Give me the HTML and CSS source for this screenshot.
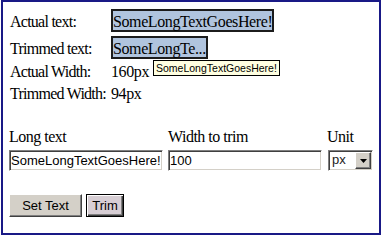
FILE: index.html
```html
<!DOCTYPE html>
<html>
<head>
<meta charset="utf-8">
<title>Trim text</title>
<link rel="stylesheet" href="styles.css">
</head>
<body>
<div class="frame">
  <div class="results">
    <div class="label">Actual text:</div>
    <div class="value"><span class="textbox">SomeLongTextGoesHere!</span></div>
    <div class="label">Trimmed text:</div>
    <div class="value"><span class="textbox">SomeLongTe...</span></div>
    <div class="label">Actual Width:</div>
    <div class="value">160px</div>
    <div class="label">Trimmed Width:</div>
    <div class="value">94px</div>
  </div>
  <div class="tooltip">SomeLongTextGoesHere!</div>
  <div class="controls">
    <label class="field-label" for="longText">Long text</label>
    <label class="field-label" for="trimWidth">Width to trim</label>
    <label class="field-label">Unit</label>
    <input class="field" id="longText" type="text" value="SomeLongTextGoesHere!">
    <input class="field" id="trimWidth" type="text" value="100">
    <div class="select">
      <span class="select-value">px</span>
      <span class="select-arrow"><svg width="7" height="4" viewBox="0 0 7 4"><path d="M0 0H7L3.5 4Z" fill="#000"/></svg></span>
    </div>
  </div>
  <div class="buttons">
    <button class="btn btn-set" type="button">Set Text</button>
    <button class="btn btn-default" type="button">Trim</button>
  </div>
</div>
</body>
</html>
```

FILE: styles.css
```css
* {
  box-sizing: border-box;
}

body {
  margin: 0;
  background: #fff;
  color: #000;
  font-family: "Liberation Serif", "Times New Roman", serif;
  font-size: 16px;
}

.frame {
  position: relative;
  width: 380px;
  height: 235px;
  margin-left: 1px;
  border: 2px solid #191986;
  padding: 7px 0 0 6px;
}

.results {
  display: grid;
  grid-template-columns: 100px auto;
  justify-content: start;
  column-gap: 1px;
  row-gap: 4px;
  align-items: baseline;
  margin-left: 1px;
  line-height: 18px;
}

.label {
  letter-spacing: -0.75px;
  white-space: nowrap;
}

.value {
  letter-spacing: -0.4px;
  white-space: nowrap;
}

.textbox {
  display: inline-block;
  background: #b0c4de;
  border: 2px solid #1c1c1c;
  padding: 2px 0 0;
  line-height: 17px;
}

.tooltip {
  position: absolute;
  left: 150px;
  top: 58px;
  background: #ffffe1;
  border: 1px solid #000;
  padding: 0 2px;
  font-family: "Liberation Sans", Arial, sans-serif;
  font-size: 10.5px;
  line-height: 14px;
  white-space: nowrap;
}

.controls {
  display: grid;
  grid-template-columns: 154px 154px 46px;
  column-gap: 5px;
  row-gap: 4px;
  margin-top: 25px;
}

.field-label {
  line-height: 18px;
  letter-spacing: -0.5px;
  white-space: nowrap;
}

.field {
  width: 154px;
  height: 21px;
  margin: 0;
  padding: 0 1px;
  border: 1px solid;
  border-color: #808080 #fff #fff #808080;
  box-shadow: inset 1px 1px #404040, inset -1px -1px #d4d0c8;
  background: #fff;
  color: #000;
  font-family: "Liberation Sans", Arial, sans-serif;
  font-size: 13px;
  outline: none;
}

.select {
  display: flex;
  width: 45px;
  height: 21px;
  margin-left: 1px;
  border: 1px solid;
  border-color: #808080 #fff #fff #808080;
  padding: 1px;
  box-shadow: inset 1px 1px #404040, inset -1px -1px #d4d0c8;
  background: #fff;
}

.select-value {
  flex: 1;
  padding-left: 2px;
  font-family: "Liberation Sans", Arial, sans-serif;
  font-size: 13px;
  line-height: 16px;
  color: #222;
}

.select-arrow {
  display: flex;
  align-items: center;
  justify-content: center;
  width: 16px;
  background: #d4d0c8;
  border: 1px solid;
  border-color: #fff #404040 #404040 #fff;
  box-shadow: inset -1px -1px #808080;
}

.buttons {
  display: flex;
  gap: 4px;
  margin-top: 23px;
}

.btn {
  height: 23px;
  margin: 0;
  padding: 0;
  font-family: "Liberation Sans", Arial, sans-serif;
  font-size: 13px;
  color: #000;
  background: #d4d0c8;
  border: 1px solid;
}

.btn-set {
  width: 73px;
  border-color: #fff #404040 #404040 #fff;
  box-shadow: inset -1px -1px #808080;
}

.btn-default {
  width: 38px;
  background: #d7ced4;
  border-color: #000;
  box-shadow: inset 1px 1px #fff, inset -1px -1px #404040, inset -2px -2px #808080;
}
```
